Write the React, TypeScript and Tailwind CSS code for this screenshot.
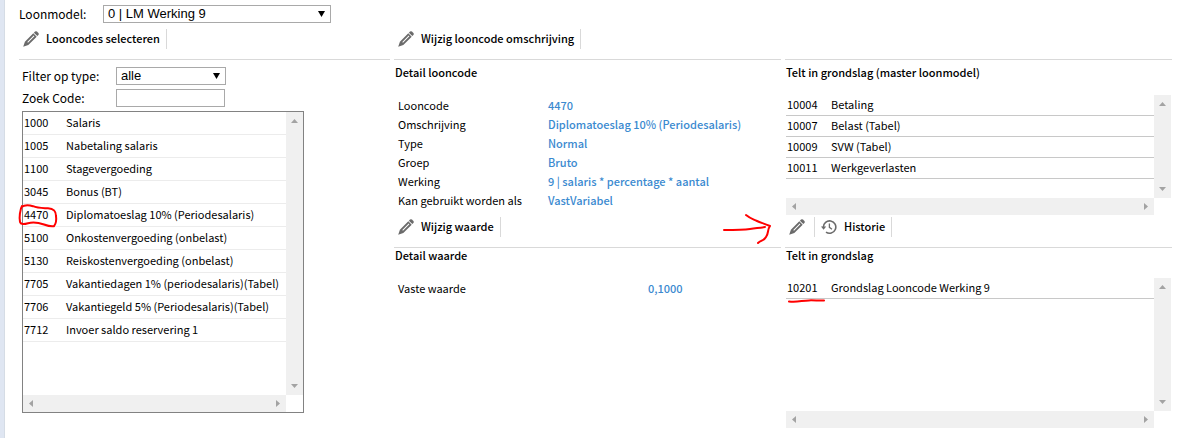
import type { ReactNode } from "react";

const FONT = "font-['Noto_Sans_CJK_SC','Open_Sans',sans-serif]";

const looncodes = [
  { code: "1000", name: "Salaris" },
  { code: "1005", name: "Nabetaling salaris" },
  { code: "1100", name: "Stagevergoeding" },
  { code: "3045", name: "Bonus (BT)" },
  { code: "4470", name: "Diplomatoeslag 10% (Periodesalaris)", marked: true },
  { code: "5100", name: "Onkostenvergoeding (onbelast)" },
  { code: "5130", name: "Reiskostenvergoeding (onbelast)" },
  { code: "7705", name: "Vakantiedagen 1% (periodesalaris)(Tabel)" },
  { code: "7706", name: "Vakantiegeld 5% (Periodesalaris)(Tabel)" },
  { code: "7712", name: "Invoer saldo reservering 1" },
];

const details = [
  { label: "Looncode", value: "4470" },
  { label: "Omschrijving", value: "Diplomatoeslag 10% (Periodesalaris)" },
  { label: "Type", value: "Normal" },
  { label: "Groep", value: "Bruto" },
  { label: "Werking", value: "9 | salaris * percentage * aantal" },
  { label: "Kan gebruikt worden als", value: "VastVariabel" },
];

const masterGrondslag = [
  { code: "10004", name: "Betaling" },
  { code: "10007", name: "Belast (Tabel)" },
  { code: "10009", name: "SVW (Tabel)" },
  { code: "10011", name: "Werkgeverlasten" },
];

const grondslag = [{ code: "10201", name: "Grondslag Looncode Werking 9", marked: true }];

const PencilIcon = () => (
  <svg className="size-4 shrink-0" viewBox="0 0 16 16" fill="#6b6b6b" aria-hidden="true">
    <path d="M12 0.6 Q13 -0.2 14 0.6 L15.4 2 Q16.2 3 15.4 4 L14.3 5.1 L10.9 1.7 Z" />
    <path
      fillRule="evenodd"
      d="M10.3 2.3 L13.7 5.7 L5.3 14.1 L0.2 15.8 L1.9 10.7 Z M10.7 4.6 L4.3 11 L5 11.7 L11.4 5.3 Z"
    />
  </svg>
);

const HistoryIcon = () => (
  <svg className="size-4 shrink-0" viewBox="0 0 16 16" fill="none" stroke="#6b6b6b" aria-hidden="true">
    <path d="M2.4 8.2 A6.2 6.2 0 1 1 5 13.1" strokeWidth="1.6" />
    <path d="M0 7.6 H5.2 L2.6 10.8 Z" fill="#6b6b6b" stroke="none" />
    <path d="M8.4 4.4 V8.4 L11 10.2" strokeWidth="1.3" />
  </svg>
);

const Arrow = ({ dir }: { dir: "up" | "down" | "left" | "right" }) => {
  const points = {
    up: "0,4 7,4 3.5,0",
    down: "0,0 7,0 3.5,4",
    left: "4,0 4,7 0,3.5",
    right: "0,0 0,7 4,3.5",
  };
  const vertical = dir === "up" || dir === "down";
  return (
    <svg
      className={vertical ? "h-1 w-[7px]" : "h-[7px] w-1"}
      viewBox={vertical ? "0 0 7 4" : "0 0 4 7"}
      fill="#a3a3a3"
      aria-hidden="true"
    >
      <polygon points={points[dir]} />
    </svg>
  );
};

// Content area with both scrollbars always visible
const ScrollPanel = ({ children, className }: { children: ReactNode; className: string }) => (
  <div className={`grid grid-cols-[minmax(0,1fr)_17px] grid-rows-[minmax(0,1fr)_17px] ${className}`}>
    <div className="min-w-0">{children}</div>
    <div className="flex flex-col items-center justify-between bg-[#f0f0f0] py-[7px]">
      <Arrow dir="up" />
      <Arrow dir="down" />
    </div>
    <div className="flex items-center justify-between bg-[#f0f0f0] px-[6px]">
      <Arrow dir="left" />
      <Arrow dir="right" />
    </div>
  </div>
);

const ToolButton = ({ icon, label, title }: { icon: ReactNode; label?: string; title?: string }) => (
  <button
    type="button"
    aria-label={title}
    className={`flex h-5 items-center gap-[7px] border-r border-[#d9d9d9] pl-1 font-medium ${label ? "pr-[6px]" : "pr-[9px]"}`}
  >
    {icon}
    {label && <span className="pb-0.5 leading-4">{label}</span>}
  </button>
);

const Toolbar = ({ children }: { children?: ReactNode }) => (
  <div className="relative flex h-[31px] items-start gap-0.5 border-b border-[#d9d9d9]">{children}</div>
);

const Heading = ({ children }: { children: ReactNode }) => (
  <h2 className="pb-0.5 pl-px leading-[14px] font-medium">{children}</h2>
);

const SelectBox = ({ id, value, className }: { id: string; value: string; className: string }) => (
  <div className={`relative ${className}`}>
    <select
      id={id}
      defaultValue={value}
      className="block h-[18px] w-full appearance-none border border-[#a9a9a9] bg-white pl-1 font-['Liberation_Sans',Arial,sans-serif] text-[13px] leading-4"
    >
      <option>{value}</option>
    </select>
    <svg
      className="pointer-events-none absolute top-[6px] right-[6px] h-[6px] w-[7px]"
      viewBox="0 0 7 6"
      aria-hidden="true"
    >
      <polygon points="0,0 7,0 3.5,6" />
    </svg>
  </div>
);

const GrondslagTable = ({ rows }: { rows: { code: string; name: string; marked?: boolean }[] }) => (
  <table className="w-full table-fixed border-separate border-spacing-0">
    <tbody>
      {rows.map((row) => (
        <tr key={row.code}>
          <td className="relative w-[45px] border-b border-[#c8c8c8] p-0 pb-0.5 pl-px leading-[18px]">
            {row.code}
            {row.marked && (
              <svg
                className="pointer-events-none absolute top-5 left-0.5 h-[6px] w-[38px]"
                viewBox="0 0 38 6"
                fill="none"
                stroke="#f00"
                strokeWidth="2"
                strokeLinecap="round"
              >
                <path d="M1 3.4 C8 4.6 14 2.6 21 2.4 S31 3 36 2.4" />
              </svg>
            )}
          </td>
          <td className="border-b border-[#c8c8c8] p-0 pb-0.5 leading-[18px]">{row.name}</td>
        </tr>
      ))}
    </tbody>
  </table>
);

export default function App() {
  return (
    <div className={`flex min-h-screen bg-white text-[11px] text-black ${FONT}`}>
      <div className="w-[5px] shrink-0 border-r border-[#d5dce5] bg-[#dfe6f2]" />
      <main className="min-w-0 flex-1 pt-[5px] pr-[6px] pl-[14px]">
        <div className="flex h-[18px] items-center">
          <label htmlFor="loonmodel" className="w-21 text-[12px]">
            Loonmodel:
          </label>
          <SelectBox id="loonmodel" value="0 | LM Werking 9" className="w-[228px]" />
        </div>

        <div className="mt-[6px] grid grid-cols-[371fr_387fr_387fr] gap-x-1">
          <section>
            <Toolbar>
              <ToolButton icon={<PencilIcon />} label="Looncodes selecteren" />
            </Toolbar>
            <div className="flex flex-col gap-1 pt-[7px] pl-[3px]">
              <div className="flex items-center">
                <label htmlFor="type" className="w-[94px] text-[12px] leading-[18px]">
                  Filter op type:
                </label>
                <SelectBox id="type" value="alle" className="w-[110px]" />
              </div>
              <div className="flex items-center">
                <label htmlFor="zoek" className="w-[94px] text-[12px] leading-[18px]">
                  Zoek Code:
                </label>
                <input id="zoek" type="text" className="h-[18px] w-[109px] border border-[#a9a9a9] px-1" />
              </div>
              <ScrollPanel className="h-[302px] w-[282px] border border-[#828282]">
                <table className="w-full table-fixed border-separate border-spacing-0">
                  <tbody>
                    {looncodes.map((row) => (
                      <tr key={row.code}>
                        <td className="relative w-[43px] border-b border-[#ececec] p-0 pb-0.5 pl-px leading-5">
                          {row.code}
                          {row.marked && (
                            <svg
                              className="pointer-events-none absolute top-0 -left-1 h-6 w-10 overflow-visible"
                              viewBox="0 0 40 24"
                              fill="none"
                              stroke="#f00"
                              strokeWidth="2"
                              strokeLinejoin="round"
                            >
                              <path d="M2.5 3 C5 1.2 10 1 14 2.2 C19 4.5 24 4 29 4.2 C36 4.6 37 8 37 12 C37.6 16 36.6 20 35 22.2 C32 22.8 29 22 25 20.5 C19 18.4 14 17.8 9 19.2 C5 20.4 1.6 20.6 1 18 C0 14 1 5 3.2 1.6" />
                            </svg>
                          )}
                        </td>
                        <td className="border-b border-[#ececec] p-0 pb-0.5 leading-5 whitespace-nowrap">{row.name}</td>
                      </tr>
                    ))}
                  </tbody>
                </table>
              </ScrollPanel>
            </div>
          </section>

          <section>
            <Toolbar>
              <ToolButton icon={<PencilIcon />} label="Wijzig looncode omschrijving" />
            </Toolbar>
            <div className="pt-[5px]">
              <Heading>Detail looncode</Heading>
              <dl className="mt-[15px] grid grid-cols-[150px_1fr] pl-1 leading-[19px]">
                {details.map((row) => (
                  <div key={row.label} className="contents">
                    <dt>{row.label}</dt>
                    <dd className="font-medium text-[#3b8ad0]">{row.value}</dd>
                  </div>
                ))}
              </dl>
            </div>
            <div className="mt-[7px]">
              <Toolbar>
                <ToolButton icon={<PencilIcon />} label="Wijzig waarde" />
                <svg
                  className="pointer-events-none absolute -top-1 right-2.5 h-8 w-12"
                  viewBox="0 0 48 32"
                  fill="none"
                  stroke="#f00"
                  strokeWidth="2"
                  strokeLinecap="round"
                  strokeLinejoin="round"
                >
                  <path d="M1 17 C12 17 20 17 27 16 S36 15 42 14" />
                  <path d="M23 2 C28 6 30 6 34 8 S40 10 47 13 C44 17 46 20 43 24 C41 28 38 27 35 30" />
                </svg>
              </Toolbar>
            </div>
            <Heading>Detail waarde</Heading>
            <dl className="mt-[15px] grid grid-cols-[250px_1fr] pl-1 leading-[19px]">
              <dt>Vaste waarde</dt>
              <dd className="font-medium text-[#3b8ad0]">0,1000</dd>
            </dl>
          </section>

          <section>
            <Toolbar />
            <div className="pt-[5px]">
              <Heading>Telt in grondslag (master loonmodel)</Heading>
              <ScrollPanel className="mx-px mt-[14px] h-[120px]">
                <GrondslagTable rows={masterGrondslag} />
              </ScrollPanel>
            </div>
            <div className="mt-0.5">
              <Toolbar>
                <ToolButton icon={<PencilIcon />} title="Wijzig grondslag" />
                <ToolButton icon={<HistoryIcon />} label="Historie" />
              </Toolbar>
            </div>
            <Heading>Telt in grondslag</Heading>
            <ScrollPanel className="mx-px mt-[14px] h-[150px]">
              <GrondslagTable rows={grondslag} />
            </ScrollPanel>
          </section>
        </div>
      </main>
    </div>
  );
}
